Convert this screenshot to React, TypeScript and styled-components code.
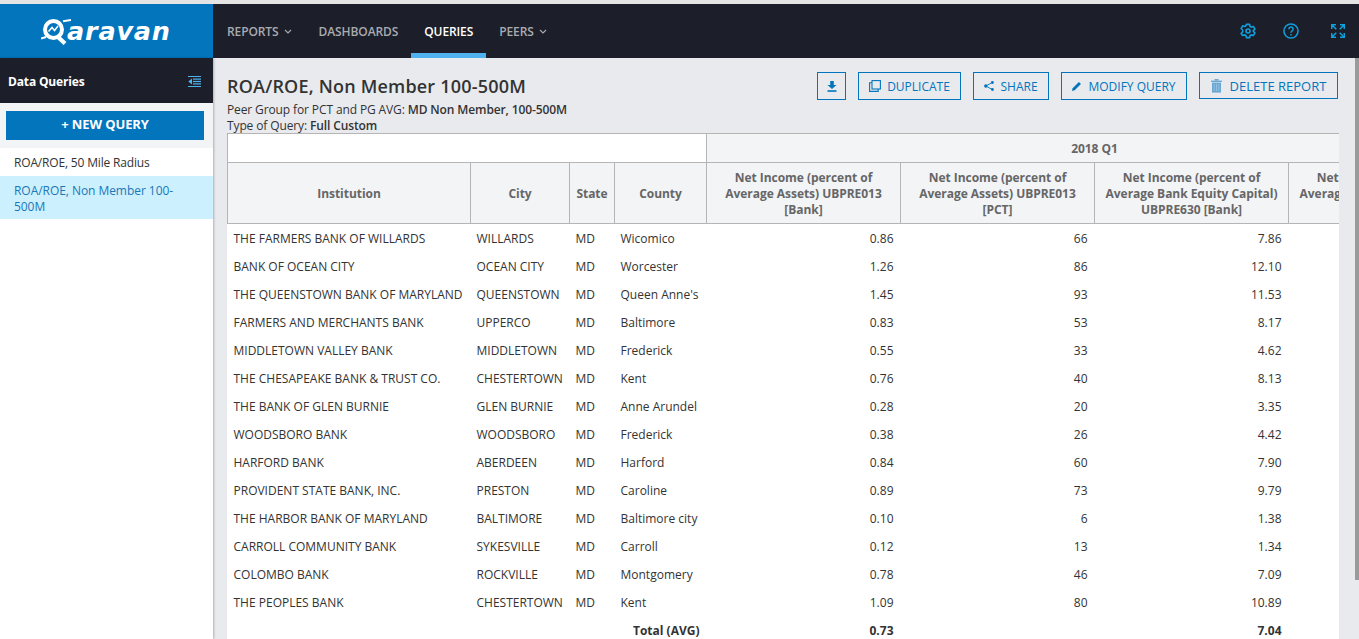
import React from "react";
import styled, { createGlobalStyle } from "styled-components";

const Global = createGlobalStyle`
  html, body { margin: 0; padding: 0; height: 100%; overflow: hidden; background: #fff; }
  body { font-family: "Open Sans", "Liberation Sans", sans-serif; font-size: 12px; color: #333; }
  * { box-sizing: border-box; }
`;

const Page = styled.div`
  position: relative;
  height: 639px;
  width: 1359px;
  overflow: hidden;
  border-top: 4px solid #e4e4e4;
  display: flex;
  flex-direction: column;
`;
const TopBar = styled.header`
  height: 54px;
  flex: none;
  display: flex;
  background: #1c1f2a;
`;
const LogoBox = styled.div`
  width: 213px;
  flex: none;
  background: #0275bd;
  display: flex;
  align-items: flex-start;
  padding: 15px 0 0 41px;
  color: #fff;
`;
const LogoText = styled.span`
  font-family: "DejaVu Sans", sans-serif;
  font-size: 25.5px;
  font-weight: 700;
  font-style: italic;
  line-height: 24px;
  letter-spacing: 0.8px;
  margin-left: -4px;
`;
const Nav = styled.nav`
  display: flex;
  height: 100%;
  padding-left: 1px;
  flex: 1;
`;
const NavItem = styled.a<{ $active?: boolean }>`
  height: 100%;
  display: flex;
  align-items: center;
  gap: 5px;
  padding: 5px 13px 0;
  font-size: 12px;
  font-weight: 600;
  letter-spacing: -0.1px;
  color: ${(p) => (p.$active ? "#fff" : "#a9abb0")};
  border-bottom: 5px solid ${(p) => (p.$active ? "#4fb2ee" : "transparent")};
  svg { margin-right: 1px; }
`;
const NavIcons = styled.div`
  display: flex;
  align-items: center;
  padding-right: 14px;
  color: #0e9fdc;
  svg + svg { margin-left: 27px; }
  svg:last-child { margin-left: 32px; }
`;
const Body = styled.div`
  flex: 1;
  display: flex;
  min-height: 0;
`;
const Sidebar = styled.aside`
  width: 213px;
  flex: none;
  background: #fff;
  box-shadow: 1px 0 2px rgba(0, 0, 0, 0.25);
  z-index: 1;
`;
const SideHead = styled.div`
  height: 45px;
  background: #1c1f2a;
  color: #fff;
  font-weight: 700;
  font-size: 12px;
  letter-spacing: -0.15px;
  display: flex;
  align-items: center;
  justify-content: space-between;
  padding: 2px 12px 0 8px;
`;
const SideAction = styled.div`
  height: 45px;
  background: #f3f4f6;
  padding: 8px 9px 8px 6px;
`;
const NewButton = styled.button`
  width: 100%;
  height: 29px;
  border: 0;
  padding: 0 0 4px;
  background: #0275bd;
  color: #fff;
  font: 700 13px "Open Sans", sans-serif;
  letter-spacing: -0.1px;
`;
const QueryItem = styled.div<{ $active?: boolean }>`
  padding: ${(p) => (p.$active ? "7px 30px 4px 14px" : "7px 30px 5px 14px")};
  line-height: 16px;
  font-size: 12px;
  letter-spacing: ${(p) => (p.$active ? "-0.05px" : "-0.17px")};
  background: ${(p) => (p.$active ? "#cdf0fe" : "#fff")};
  color: ${(p) => (p.$active ? "#1a77b8" : "#333")};
`;
const Main = styled.main`
  flex: 1;
  min-width: 0;
  background: #e9eaee;
  padding: 14px 20px 0 14px;
  display: flex;
  flex-direction: column;
`;
const TitleRow = styled.div`
  height: 61px;
  flex: none;
  display: flex;
  justify-content: space-between;
  align-items: flex-start;
`;
const TitleBlock = styled.div``;
const Title = styled.h1`
  margin: 0 0 2px;
  font-size: 18px;
  line-height: 28px;
  font-weight: 600;
  color: #333;
  letter-spacing: 0.2px;
`;
const SubLine = styled.div`
  font-size: 12px;
  line-height: 16px;
  color: #333;
  letter-spacing: -0.12px;
  b { font-weight: 600; }
`;
const Actions = styled.div`
  display: flex;
  gap: 12px;
  margin-right: 1px;
`;
const ActionButton = styled.button<{ $w: number; $h?: number; $big?: boolean; $gap?: number }>`
  width: ${(p) => p.$w}px;
  height: ${(p) => p.$h ?? 28}px;
  border: 1px solid #0275bd;
  background: transparent;
  color: #0275bd;
  font: 400 ${(p) => (p.$big ? 13 : 12)}px "Open Sans", sans-serif;
  padding: 0;
  display: flex;
  align-items: center;
  justify-content: center;
  gap: ${(p) => p.$gap ?? 6}px;
  white-space: nowrap;
`;
const TableWrap = styled.div`
  width: 1112px;
  flex: 1;
  overflow: hidden;
  background: #fff;
`;
const Table = styled.table`
  border-collapse: collapse;
  table-layout: fixed;
  width: 1255px;
  background: #fff;
`;
const Th = styled.th<{ $blank?: boolean }>`
  border: 1px solid #b5b5b5;
  background: ${(p) => (p.$blank ? "#fff" : "#f3f4f6")};
  color: #666;
  font-size: 12px;
  font-weight: 700;
  line-height: 16px;
  letter-spacing: -0.04px;
  padding: 7px 6px 5px;
  text-align: center;
  height: 29px;
`;
const HeadTh = styled(Th)`
  height: 61px;
  padding: 7px 6px 5px;
`;
const Td = styled.td<{ $num?: boolean; $bold?: boolean }>`
  height: 28px;
  padding: ${(p) => (p.$num ? "2px 7px 0 6px" : "2px 6px 0")};
  font-size: 12px;
  line-height: 16px;
  color: #333;
  white-space: nowrap;
  text-align: ${(p) => (p.$num ? "right" : "left")};
  font-weight: ${(p) => (p.$bold ? 700 : 400)};
`;
const ScrollThumb = styled.div`
  position: absolute;
  top: 54px;
  right: 0;
  width: 4px;
  height: 522px;
  background: #9a9a9a;
  z-index: 2;
`;

const rows: [string, string, string, string, string, string, string][] = [
  ["THE FARMERS BANK OF WILLARDS", "WILLARDS", "MD", "Wicomico", "0.86", "66", "7.86"],
  ["BANK OF OCEAN CITY", "OCEAN CITY", "MD", "Worcester", "1.26", "86", "12.10"],
  ["THE QUEENSTOWN BANK OF MARYLAND", "QUEENSTOWN", "MD", "Queen Anne's", "1.45", "93", "11.53"],
  ["FARMERS AND MERCHANTS BANK", "UPPERCO", "MD", "Baltimore", "0.83", "53", "8.17"],
  ["MIDDLETOWN VALLEY BANK", "MIDDLETOWN", "MD", "Frederick", "0.55", "33", "4.62"],
  ["THE CHESAPEAKE BANK & TRUST CO.", "CHESTERTOWN", "MD", "Kent", "0.76", "40", "8.13"],
  ["THE BANK OF GLEN BURNIE", "GLEN BURNIE", "MD", "Anne Arundel", "0.28", "20", "3.35"],
  ["WOODSBORO BANK", "WOODSBORO", "MD", "Frederick", "0.38", "26", "4.42"],
  ["HARFORD BANK", "ABERDEEN", "MD", "Harford", "0.84", "60", "7.90"],
  ["PROVIDENT STATE BANK, INC.", "PRESTON", "MD", "Caroline", "0.89", "73", "9.79"],
  ["THE HARBOR BANK OF MARYLAND", "BALTIMORE", "MD", "Baltimore city", "0.10", "6", "1.38"],
  ["CARROLL COMMUNITY BANK", "SYKESVILLE", "MD", "Carroll", "0.12", "13", "1.34"],
  ["COLOMBO BANK", "ROCKVILLE", "MD", "Montgomery", "0.78", "46", "7.09"],
  ["THE PEOPLES BANK", "CHESTERTOWN", "MD", "Kent", "1.09", "80", "10.89"],
];

const Chevron = () => (
  <svg width="8" height="5" viewBox="0 0 8 5" fill="none" stroke="currentColor" strokeWidth="1.1">
    <path d="M1 1l3 3 3-3" />
  </svg>
);

const LogoMark = () => (
  <svg width="30" height="26" viewBox="0 0 30 26" fill="none" stroke="#fff" style={{ flex: "none" }}>
    <circle cx="12.5" cy="10.5" r="8.5" strokeWidth="4" />
    <path d="M7.5 12.5l3.5-4 2.5 3 3.5-4.5" strokeWidth="1.5" />
    <path d="M17 18l7 6.5" strokeWidth="4.2" />
    <path d="M22 2.2l8-1.2" strokeWidth="2" />
    <path d="M0 19.5l5-1.5" strokeWidth="2" />
  </svg>
);

const Gear = () => (
  <svg width="16" height="16" viewBox="0 0 24 24" fill="none" stroke="currentColor" strokeWidth="2.4" strokeLinejoin="round">
    <circle cx="12" cy="12" r="3" />
    <path d="M9.6 2h4.8l.7 3.2 1.8 1 3.1-1 2.4 4.1-2.4 2.2v1l2.4 2.2-2.4 4.1-3.1-1-1.8 1-.7 3.2H9.6l-.7-3.2-1.8-1-3.1 1L1.6 15.7 4 13.5v-3L1.6 8.3 4 4.2l3.1 1 1.8-1z" />
  </svg>
);
const Help = () => (
  <svg width="16" height="16" viewBox="0 0 24 24" fill="none" stroke="currentColor" strokeWidth="2.3">
    <circle cx="12" cy="12" r="10.6" />
    <path d="M8.8 9.2a3.2 3.2 0 1 1 4.6 2.9c-1 .6-1.4 1.1-1.4 2.4" />
    <circle cx="12" cy="17.8" r="1.3" fill="currentColor" stroke="none" />
  </svg>
);
const Expand = () => (
  <svg width="14" height="14" viewBox="0 0 14 14" fill="none" stroke="currentColor" strokeWidth="1.5">
    <path d="M.7 5V.7H5M.7.7l4.6 4.6M13.3 5V.7H9M13.3.7L8.7 5.3M.7 9v4.3H5M.7 13.3l4.6-4.6M13.3 9v4.3H9M13.3 13.3L8.7 8.7" />
  </svg>
);
const Collapse = () => (
  <svg width="13" height="11" viewBox="0 0 13 11" fill="#4fb2ee">
    <rect x="0" y="0" width="13" height="1" />
    <rect x="0" y="10" width="13" height="1" />
    <rect x="5" y="2.5" width="8" height="1.2" />
    <rect x="5" y="4.9" width="8" height="1.2" />
    <rect x="5" y="7.3" width="8" height="1.2" />
    <path d="M4 2.5v6L0.3 5.5z" />
  </svg>
);
const Download = () => (
  <svg width="10" height="11" viewBox="0 0 10 11" fill="currentColor">
    <path d="M3.2 0h3.6v4H9.5L5 8 .5 4h2.7z" />
    <rect x="0.5" y="9.2" width="9" height="1.6" />
  </svg>
);
const Duplicate = () => (
  <svg width="12" height="12" viewBox="0 0 12 12" fill="none" stroke="currentColor" strokeWidth="1.1">
    <rect x="3" y=".6" width="8.4" height="8.4" />
    <path d="M3 2.8H.6v8.6h8.6V9" />
  </svg>
);
const Share = () => (
  <svg width="10" height="10" viewBox="0 0 10 10" fill="currentColor" stroke="currentColor">
    <path d="M8.3 1.5L1.8 5l6.5 3.5" fill="none" strokeWidth=".9" />
    <circle cx="8.4" cy="1.5" r="1.4" stroke="none" />
    <circle cx="1.8" cy="5" r="1.7" stroke="none" />
    <circle cx="8.4" cy="8.5" r="1.4" stroke="none" />
  </svg>
);
const Pencil = () => (
  <svg width="10" height="10" viewBox="0 0 11 11" fill="currentColor">
    <path d="M0 11l.7-3L7.6 1.2l2.2 2.2L3 10.3z" />
  </svg>
);
const Trash = () => (
  <svg width="11" height="14" viewBox="0 0 11 14" fill="#6aa8d4">
    <rect x="0" y="1.6" width="11" height="1.4" />
    <rect x="3.5" y="0" width="4" height="1.6" />
    <path d="M1 3.6h9v10H1z" />
    <path d="M3.2 5v7M5.5 5v7M7.8 5v7" stroke="#9cc6e4" strokeWidth=".8" />
  </svg>
);

export default function App() {
  return (
    <>
      <Global />
      <Page>
        <TopBar>
          <LogoBox>
            <LogoMark />
            <LogoText>aravan</LogoText>
          </LogoBox>
          <Nav>
            <NavItem>REPORTS <Chevron /></NavItem>
            <NavItem>DASHBOARDS</NavItem>
            <NavItem $active>QUERIES</NavItem>
            <NavItem>PEERS <Chevron /></NavItem>
          </Nav>
          <NavIcons>
            <Gear />
            <Help />
            <Expand />
          </NavIcons>
        </TopBar>
        <Body>
          <Sidebar>
            <SideHead>
              Data Queries
              <Collapse />
            </SideHead>
            <SideAction>
              <NewButton>+ NEW QUERY</NewButton>
            </SideAction>
            <QueryItem>ROA/ROE, 50 Mile Radius</QueryItem>
            <QueryItem $active>ROA/ROE, Non Member 100-500M</QueryItem>
          </Sidebar>
          <Main>
            <TitleRow>
              <TitleBlock>
                <Title>ROA/ROE, Non Member 100-500M</Title>
                <SubLine>Peer Group for PCT and PG AVG: <b>MD Non Member, 100-500M</b></SubLine>
                <SubLine>Type of Query: <b>Full Custom</b></SubLine>
              </TitleBlock>
              <Actions>
                <ActionButton $w={29} aria-label="Download"><Download /></ActionButton>
                <ActionButton $w={103}><Duplicate /> DUPLICATE</ActionButton>
                <ActionButton $w={76}><Share /> SHARE</ActionButton>
                <ActionButton $w={126}><Pencil /> MODIFY QUERY</ActionButton>
                <ActionButton $w={139} $h={27} $big $gap={8}><Trash /> DELETE REPORT</ActionButton>
              </Actions>
            </TitleRow>
            <TableWrap>
              <Table>
                <colgroup>
                  <col style={{ width: 243 }} />
                  <col style={{ width: 99 }} />
                  <col style={{ width: 45 }} />
                  <col style={{ width: 92 }} />
                  <col style={{ width: 194 }} />
                  <col style={{ width: 194 }} />
                  <col style={{ width: 194 }} />
                  <col style={{ width: 194 }} />
                </colgroup>
                <thead>
                  <tr>
                    <Th $blank colSpan={4} />
                    <Th colSpan={4}>2018 Q1</Th>
                  </tr>
                  <tr>
                    <HeadTh>Institution</HeadTh>
                    <HeadTh>City</HeadTh>
                    <HeadTh>State</HeadTh>
                    <HeadTh>County</HeadTh>
                    <HeadTh>Net Income (percent of Average Assets) UBPRE013 [Bank]</HeadTh>
                    <HeadTh>Net Income (percent of Average Assets) UBPRE013 [PCT]</HeadTh>
                    <HeadTh>Net Income (percent of Average Bank Equity Capital) UBPRE630 [Bank]</HeadTh>
                    <HeadTh>Net Income (percent of Average Bank Equity Capital) UBPRE630 [PCT]</HeadTh>
                  </tr>
                </thead>
                <tbody>
                  {rows.map((r) => (
                    <tr key={r[0]}>
                      <Td>{r[0]}</Td>
                      <Td>{r[1]}</Td>
                      <Td>{r[2]}</Td>
                      <Td>{r[3]}</Td>
                      <Td $num>{r[4]}</Td>
                      <Td $num>{r[5]}</Td>
                      <Td $num>{r[6]}</Td>
                      <Td $num />
                    </tr>
                  ))}
                  <tr>
                    <Td $num $bold colSpan={4}>Total (AVG)</Td>
                    <Td $num $bold>0.73</Td>
                    <Td $num $bold />
                    <Td $num $bold>7.04</Td>
                    <Td />
                  </tr>
                </tbody>
              </Table>
            </TableWrap>
          </Main>
        </Body>
        <ScrollThumb />
      </Page>
    </>
  );
}
